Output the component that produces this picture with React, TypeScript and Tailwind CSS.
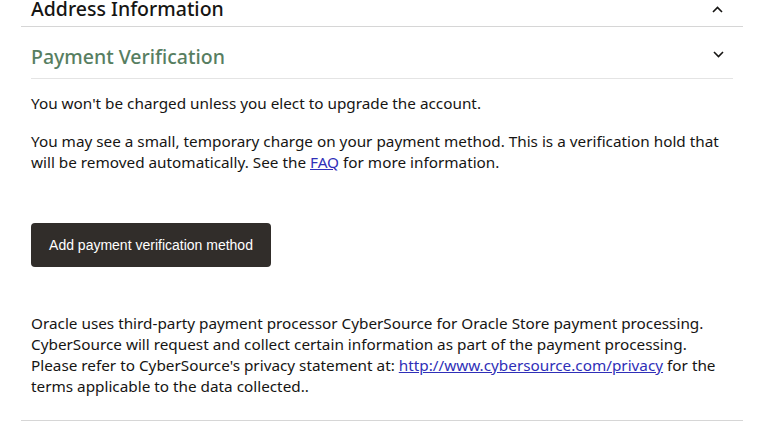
import React from 'react';

function Chevron({ up }: { up?: boolean }) {
  return (
    <svg width="11" height="7" viewBox="0 0 11 7" className="block" aria-hidden>
      <path
        d={up ? 'M1 6 L5.5 1.5 L10 6' : 'M1 1 L5.5 5.5 L10 1'}
        fill="none"
        stroke="#161513"
        strokeWidth="1.6"
      />
    </svg>
  );
}

export default function App() {
  return (
    <div className="min-h-[433px] bg-white font-['Noto_Sans','Open_Sans',sans-serif] text-[#161513]">
      <div className="mx-[21px] w-[722px] border-b border-[#d6d6d6]">
        {/* Address Information (collapsed, scrolled mostly out of view) */}
        <div className="flex h-[27px] items-start justify-between border-b border-[#d6d6d6] pl-[10px] pr-[20px]">
          <h2 className="-mt-[2px] text-[19.5px] font-medium leading-[22px]">Address Information</h2>
          <span className="pt-[6px]">
            <Chevron up />
          </span>
        </div>

        {/* Payment Verification */}
        <div className="px-[10px]">
          <div className="flex h-[52px] items-center justify-between border-b border-[#e4e4e4] pr-[9px]">
            <h2 className="pt-[9px] text-[19.5px] font-medium leading-[24px] text-[#577e61]">Payment Verification</h2>
            <span className="pt-[4px]">
              <Chevron />
            </span>
          </div>

          <div className="pt-[14px] text-[15.3px] leading-[21px]">
            <p>You won't be charged unless you elect to upgrade the account.</p>
            <p className="mt-[17px]">
              You may see a small, temporary charge on your payment method. This is a verification hold that
              will be removed automatically. See the{' '}
              <a href="#" className="text-[#2f2fb8] underline">
                FAQ
              </a>{' '}
              for more information.
            </p>

            <button className="mt-[50px] h-[44px] w-[240px] rounded-[4px] bg-[#312d2a] font-['Liberation_Sans',Arial,sans-serif] text-[14px] text-white">
              Add payment verification method
            </button>

            <p className="mt-[46px] pb-[23px]">
              Oracle uses third-party payment processor CyberSource for Oracle Store payment processing.
              CyberSource will request and collect certain information as part of the payment processing.
              Please refer to CyberSource's privacy statement at:{' '}
              <a href="#" className="text-[#2f2fb8] underline">
                http://www.cybersource.com/privacy
              </a>{' '}
              for the terms applicable to the data collected..
            </p>
          </div>
        </div>
      </div>
    </div>
  );
}
